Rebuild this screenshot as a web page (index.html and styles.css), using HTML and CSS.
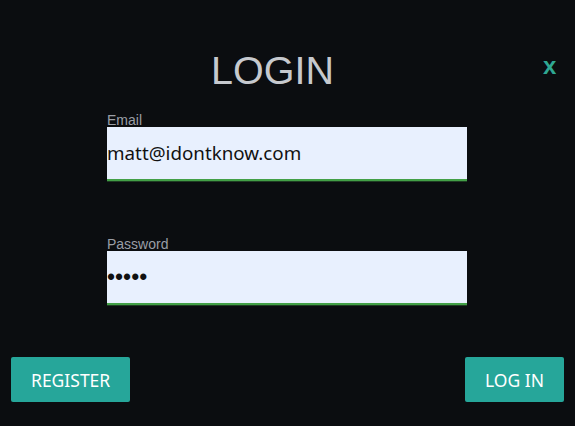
FILE: index.html
```html
<!DOCTYPE html>
<html>
<head>
<meta charset="utf-8">
<link rel="stylesheet" href="styles.css">
</head>
<body>
<div class="modal">
  <div class="header">
    <h1 class="title">LOGIN</h1>
    <div class="close"><span>x</span></div>
  </div>
  <form class="form">
    <label class="label" for="email">Email</label>
    <input class="field" id="email" type="text" value="matt@idontknow.com">
    <label class="label label-pw" for="pw">Password</label>
    <input class="field field-pw" id="pw" type="password" value="12345">
  </form>
  <div class="actions">
    <button class="btn" type="button">REGISTER</button>
    <button class="btn" type="button">LOG IN</button>
  </div>
</div>
</body>
</html>
```
FILE: styles.css
```css
html, body {
  margin: 0;
  padding: 0;
  background: #0b0d10;
  height: 100%;
}
.modal {
  width: 575px;
  height: 426px;
  overflow: hidden;
}
.header {
  display: flex;
  margin-top: 47px;
  height: 46px;
}
.title {
  flex: 1;
  margin: 0;
  text-align: center;
  font-family: "Liberation Sans", Arial, sans-serif;
  font-weight: 400;
  font-size: 39.5px;
  line-height: 46px;
  color: #c6c9ce;
}
.close {
  flex: 0 0 30px;
  margin-top: 7px;
  font-family: "Liberation Sans", Arial, sans-serif;
  font-weight: 700;
  font-size: 24px;
  line-height: 24px;
  color: #2fa792;
}
.close span {
  margin-left: -2px;
}
.form {
  width: 360px;
  margin: 20px 0 0 107px;
  display: flex;
  flex-direction: column;
}
.label {
  font-family: "Liberation Sans", Arial, sans-serif;
  font-size: 14px;
  line-height: 14px;
  color: #9a9ea6;
}
.label-pw {
  margin-top: 56px;
}
.field {
  box-sizing: content-box;
  height: 52px;
  margin: 0;
  padding: 0;
  border: none;
  border-bottom: 2px solid #43a047;
  box-shadow: 0 1px 0 #1f3d23;
  background: #e8f0fe;
  font-family: "Noto Sans", "Open Sans", sans-serif;
  font-size: 18.8px;
  color: #111;
  outline: none;
}
.field-pw {
  font-family: "Liberation Sans", Arial, sans-serif;
  font-size: 23px;
  letter-spacing: 0;
}
.actions {
  display: flex;
  justify-content: space-between;
  padding: 0 11px;
  margin-top: 52px;
}
.btn {
  height: 45px;
  padding: 0 20px;
  border: none;
  border-radius: 2px;
  background: #26a69a;
  color: #fff;
  font-family: "Noto Sans", "Open Sans", sans-serif;
  font-size: 17.5px;
  letter-spacing: 0;
}
```
